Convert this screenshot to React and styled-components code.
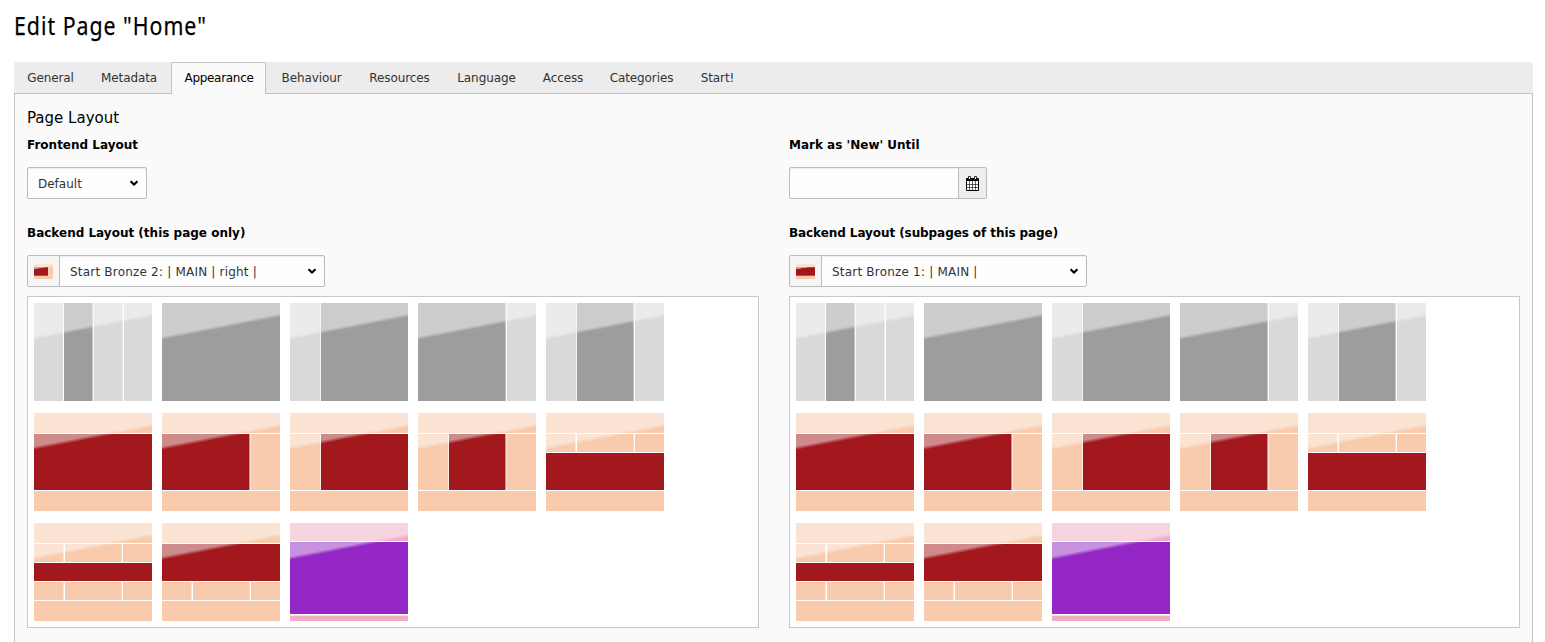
import React from 'react';
import styled, { createGlobalStyle } from 'styled-components';

const GlobalStyle = createGlobalStyle`
  *, *::before, *::after { box-sizing: border-box; }
  body {
    margin: 0;
    height: 642px;
    overflow: hidden;
    background: #fff;
    color: #000;
    font: 12px/18px 'DejaVu Sans', Verdana, sans-serif;
  }
`;

const Page = styled.main`
  display: flex;
  flex-direction: column;
  height: 642px;
  overflow: hidden;
  padding: 0 12px 0 14px;
`;

const Title = styled.h1`
  align-self: flex-start;
  margin: 9px 0 21px;
  height: 32px;
  font: 400 26px/32px 'Noto Sans', sans-serif;
  letter-spacing: 1.2px;
  white-space: nowrap;
  transform: scaleX(0.82);
  transform-origin: left;
  -webkit-text-stroke: 0.25px #000;
`;

const TabBar = styled.nav`
  display: flex;
  flex: none;
  height: 32px;
  background: #ececec;
  border-bottom: 1px solid #c3c3c3;
  border-radius: 2px 2px 0 0;
`;

const Tab = styled.button`
  flex: none;
  width: ${p => p.$width}px;
  height: 32px;
  padding: 0 0 2px 1px;
  border: 1px solid ${p => (p.$active ? '#c3c3c3' : 'transparent')};
  border-bottom: 0;
  border-radius: 2px 2px 0 0;
  background: ${p => (p.$active ? '#fafafa' : 'transparent')};
  color: ${p => (p.$active ? '#000' : '#333')};
  font: inherit;
  letter-spacing: ${p => (p.$active ? -0.3 : -0.1)}px;
  white-space: nowrap;
`;

const Panel = styled.section`
  flex: none;
  height: 600px;
  padding: 13px 12px 12px;
  border: 1px solid #c3c3c3;
  border-top: 0;
  background: #fafafa;
`;

const SectionTitle = styled.h2`
  margin: 0 0 7px;
  font: 400 15px/22px 'DejaVu Sans', Verdana, sans-serif;
`;

const Columns = styled.div`
  display: grid;
  grid-template-columns: 732px 731px;
  column-gap: 30px;
  row-gap: 25px;
`;

const Field = styled.div`
  display: flex;
  flex-direction: column;
  align-items: flex-start;
`;

const Label = styled.label`
  height: 18px;
  margin-bottom: 13px;
  font-weight: 700;
  line-height: 18px;
  letter-spacing: ${p => p.$spacing || 0}px;
  white-space: nowrap;
`;

const Control = styled.div`
  display: flex;
  width: ${p => p.$width}px;
  height: 32px;
  border: 1px solid #bbb;
  border-radius: 2px;
  background: #fefefe;
  box-shadow: inset 0 1px 1px rgba(0, 0, 0, 0.07);
  overflow: hidden;
`;

const Addon = styled.span`
  display: flex;
  flex: none;
  align-items: center;
  justify-content: center;
  width: ${p => p.$width}px;
  background: ${p => p.$background};
  border: 0 solid #bbb;
  border-width: ${p => (p.$end ? '0 0 0 1px' : '0 1px 0 0')};
`;

const Value = styled.span`
  flex: 1;
  padding: 0 10px;
  line-height: 32px;
  color: #333;
  letter-spacing: ${p => p.$spacing || 0}px;
  white-space: nowrap;
`;

const Arrow = styled.svg`
  flex: none;
  width: 10px;
  height: 8px;
  margin: 11px 7px 0 0;
`;

const Picker = styled.div`
  display: grid;
  grid-template-columns: repeat(5, 118px);
  grid-auto-rows: 98px;
  gap: 12px 10px;
  align-self: stretch;
  height: 332px;
  margin-top: 9px;
  padding: 6px;
  border: 1px solid #c8c8c8;
  background: #fff;
`;

const Art = styled.svg`
  display: block;
  width: ${p => p.$width}px;
  height: ${p => p.$height}px;
`;

const DARK = '#9c9d9e';
const PALE = '#d8d9da';
const RED = '#a2181d';
const PEACH = '#f8cbad';
const PURPLE = '#9326c5';
const PINK = '#efadc6';

// Each cell is [x, y, width, height, colour] on a 118 x 98 canvas.
const head = [0, 0, 118, 20, PEACH];
const foot = [0, 78, 118, 20, PEACH];
const split = (y, h) => [[0, y, 29.5, h, PEACH], [31, y, 56.6, h, PEACH], [89, y, 29, h, PEACH]];

const LAYOUTS = [
  [[0, 0, 29, 98, PALE], [30, 0, 28.6, 98, DARK], [59.8, 0, 28.8, 98, PALE], [90, 0, 28, 98, PALE]],
  [[0, 0, 118, 98, DARK]],
  [[0, 0, 30.4, 98, PALE], [31, 0, 87, 98, DARK]],
  [[0, 0, 87.6, 98, DARK], [89, 0, 29, 98, PALE]],
  [[0, 0, 30.4, 98, PALE], [31, 0, 56.6, 98, DARK], [89, 0, 29, 98, PALE]],
  [head, [0, 21, 118, 56, RED], foot],
  [head, [0, 21, 87.5, 56, RED], [88.6, 21, 29.4, 56, PEACH], foot],
  [head, [0, 21, 30.3, 56, PEACH], [31, 21, 87, 56, RED], foot],
  [head, [0, 21, 30.3, 56, PEACH], [31, 21, 56.5, 56, RED], [88.5, 21, 29.5, 56, PEACH], foot],
  [head, ...split(21, 18), [0, 40, 118, 37, RED], foot],
  [head, ...split(21, 18), [0, 40, 118, 18, RED], ...split(59, 18), foot],
  [head, [0, 21, 118, 37, RED], ...split(59, 18), foot],
  [[0, 0, 118, 18, PINK], [0, 19, 118, 72, PURPLE], [0, 92.6, 118, 5.4, PINK]],
];

function LayoutArt({ cells, width = 118, height = 98 }) {
  const sheenId = React.useId();
  return (
    <Art $width={width} $height={height} viewBox="0 0 118 98" preserveAspectRatio="none" aria-hidden="true">
      <defs>
        <linearGradient id={sheenId} gradientUnits="userSpaceOnUse" x1="58.5" y1="22" x2="59.2" y2="25.6">
          <stop offset="0" stopColor="#fcfcfa" stopOpacity="0.5" />
          <stop offset="1" stopColor="#fcfcfa" stopOpacity="0" />
        </linearGradient>
      </defs>
      {cells.map(([x, y, w, h, fill], i) => (
        <rect key={i} x={x} y={y} width={w} height={h} fill={fill} />
      ))}
      <rect width="118" height="98" fill={`url(#${sheenId})`} />
    </Art>
  );
}

function Chevron() {
  return (
    <Arrow viewBox="0 0 10 8" aria-hidden="true">
      <path d="M1.5 2.2L5 5.6L8.5 2.2" fill="none" stroke="#000" strokeWidth="2.1" />
    </Arrow>
  );
}

function Calendar() {
  return (
    <Art $width={15} $height={15} viewBox="0 0 15 15" aria-hidden="true">
      <path d="M1.5 2.5H13.5V14.5H1.5Z" fill="#fff" stroke="#000" />
      <path d="M1.5 2.5H13.5V5H1.5Z" />
      <path d="M4.5 5V14M7.5 5V14M10.5 5V14M1 8.5H14M1 11.5H14" fill="none" stroke="#000" strokeWidth="0.6" />
      <path d="M3.5 0.5H5.5V3.5H3.5ZM9.5 0.5H11.5V3.5H9.5Z" fill="#fff" stroke="#000" strokeWidth="0.8" />
    </Art>
  );
}

function BackendLayoutField({ label, value, selected, labelSpacing }) {
  return (
    <Field>
      <Label $spacing={labelSpacing}>{label}</Label>
      <Control $width={298}>
        <Addon $width={32} $background="#f5f5f5">
          <LayoutArt cells={LAYOUTS[selected]} width={19} height={15} />
        </Addon>
        <Value $spacing={0.2}>{value}</Value>
        <Chevron />
      </Control>
      <Picker>
        {LAYOUTS.map((cells, i) => <LayoutArt key={i} cells={cells} />)}
      </Picker>
    </Field>
  );
}

const TABS = [
  ['General', 72], ['Metadata', 85], ['Appearance', 95], ['Behaviour', 90], ['Resources', 86],
  ['Language', 88], ['Access', 65], ['Categories', 92], ['Start!', 60],
];

export default function App() {
  return (
    <Page>
      <GlobalStyle />
      <Title>Edit Page "Home"</Title>
      <TabBar>
        {TABS.map(([name, width]) => (
          <Tab key={name} $width={width} $active={name === 'Appearance'}>{name}</Tab>
        ))}
      </TabBar>
      <Panel>
        <SectionTitle>Page Layout</SectionTitle>
        <Columns>
          <Field>
            <Label>Frontend Layout</Label>
            <Control $width={120}>
              <Value>Default</Value>
              <Chevron />
            </Control>
          </Field>
          <Field>
            <Label>Mark as 'New' Until</Label>
            <Control $width={198}>
              <Value />
              <Addon $width={28} $background="#eee" $end>
                <Calendar />
              </Addon>
            </Control>
          </Field>
          <BackendLayoutField label="Backend Layout (this page only)" value="Start Bronze 2: | MAIN | right |" selected={6} />
          <BackendLayoutField label="Backend Layout (subpages of this page)" value="Start Bronze 1: | MAIN |" selected={5} labelSpacing={-0.08} />
        </Columns>
      </Panel>
    </Page>
  );
}
